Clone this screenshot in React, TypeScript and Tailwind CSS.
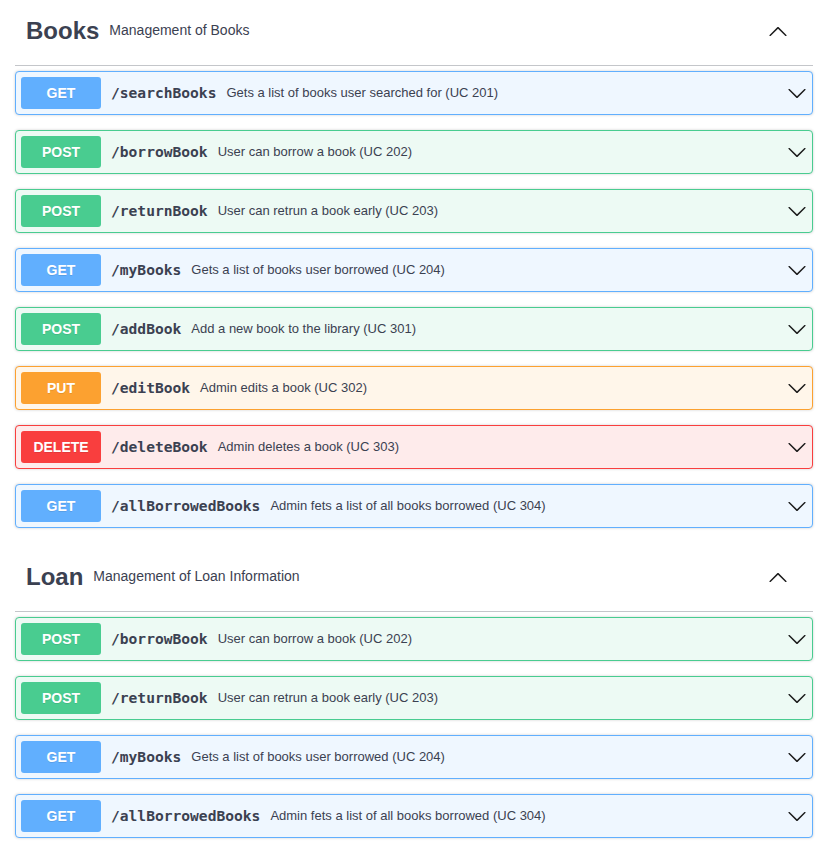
import React from "react";

type Method = "GET" | "POST" | "PUT" | "DELETE";

interface Op {
  method: Method;
  path: string;
  summary: string;
}

// swagger-ish colour per method
const styles: Record<Method, { block: string; badge: string }> = {
  GET: { block: "border-[#61affe] bg-[#eff7ff]", badge: "bg-[#61affe]" },
  POST: { block: "border-[#49cc90] bg-[#edfaf4]", badge: "bg-[#49cc90]" },
  PUT: { block: "border-[#fca130] bg-[#fff6ea]", badge: "bg-[#fca130]" },
  DELETE: { block: "border-[#f93e3e] bg-[#feebeb]", badge: "bg-[#f93e3e]" },
};

const books: Op[] = [
  { method: "GET", path: "/searchBooks", summary: "Gets a list of books user searched for (UC 201)" },
  { method: "POST", path: "/borrowBook", summary: "User can borrow a book (UC 202)" },
  { method: "POST", path: "/returnBook", summary: "User can retrun a book early (UC 203)" },
  { method: "GET", path: "/myBooks", summary: "Gets a list of books user borrowed (UC 204)" },
  { method: "POST", path: "/addBook", summary: "Add a new book to the library (UC 301)" },
  { method: "PUT", path: "/editBook", summary: "Admin edits a book (UC 302)" },
  { method: "DELETE", path: "/deleteBook", summary: "Admin deletes a book (UC 303)" },
  { method: "GET", path: "/allBorrowedBooks", summary: "Admin fets a list of all books borrowed (UC 304)" },
];

const loans: Op[] = [
  { method: "POST", path: "/borrowBook", summary: "User can borrow a book (UC 202)" },
  { method: "POST", path: "/returnBook", summary: "User can retrun a book early (UC 203)" },
  { method: "GET", path: "/myBooks", summary: "Gets a list of books user borrowed (UC 204)" },
  { method: "GET", path: "/allBorrowedBooks", summary: "Admin fets a list of all books borrowed (UC 304)" },
];

function ArrowDown() {
  return (
    <svg width="20" height="20" viewBox="0 0 20 20" className="shrink-0">
      <path
        fill="#1b1b1b"
        d="M17.418 6.109c.272-.268.709-.268.979 0s.271.701 0 .969l-7.908 7.83c-.27.268-.707.268-.979 0l-7.908-7.83c-.27-.268-.27-.701 0-.969.271-.268.709-.268.979 0L10 13.25l7.418-7.141z"
      />
    </svg>
  );
}

function ArrowUp() {
  return (
    <svg width="20" height="20" viewBox="0 0 20 20" className="shrink-0">
      <path
        fill="#1b1b1b"
        d="M17.418 14.891c.272.268.709.268.979 0s.271-.701 0-.969l-7.908-7.83c-.27-.268-.707-.268-.979 0l-7.908 7.83c-.27.268-.27.701 0 .969.271.268.709.268.979 0L10 7.75l7.418 7.141z"
      />
    </svg>
  );
}

function OpBlock({ op }: { op: Op }) {
  const s = styles[op.method];
  return (
    <div
      className={`mb-[15px] flex h-[44px] items-center rounded-[4px] border px-[5px] shadow-[0_0_3px_rgba(0,0,0,0.19)] ${s.block}`}
    >
      <span
        className={`flex h-[32px] w-[80px] shrink-0 items-center justify-center rounded-[3px] text-[14px] font-bold text-white [text-shadow:0_1px_0_rgba(0,0,0,0.1)] ${s.badge}`}
      >
        {op.method}
      </span>
      <span className="px-[10px] font-['DejaVu_Sans_Mono',monospace] text-[14.6px] font-bold text-[#3b4151]">
        {op.path}
      </span>
      <span className="flex-1 text-[13px] text-[#3b4151]">{op.summary}</span>
      <ArrowDown />
    </div>
  );
}

function TagSection({ name, desc, ops, className }: { name: string; desc: string; ops: Op[]; className?: string }) {
  return (
    <section className={className}>
      <div className="mb-[5px] flex h-[66px] items-center border-b border-[rgba(59,65,81,0.3)] pb-[4px] pl-[11px] pr-[25px]">
        <h3 className="text-[24px] font-bold text-[#3b4151]">{name}</h3>
        <small className="ml-[10px] flex-1 text-[14px] text-[#3b4151]">{desc}</small>
        <ArrowUp />
      </div>
      {ops.map((op, i) => (
        <OpBlock key={i} op={op} />
      ))}
    </section>
  );
}

export default function App() {
  return (
    <div className="min-h-[860px] bg-white font-['Liberation_Sans',Arial,sans-serif]">
      <div className="ml-[15px] w-[798px]">
        <TagSection name="Books" desc="Management of Books" ops={books} />
        {/* margin collapses with the last block's mb-15, so 18 here */}
        <TagSection name="Loan" desc="Management of Loan Information" ops={loans} className="mt-[18px]" />
      </div>
    </div>
  );
}
